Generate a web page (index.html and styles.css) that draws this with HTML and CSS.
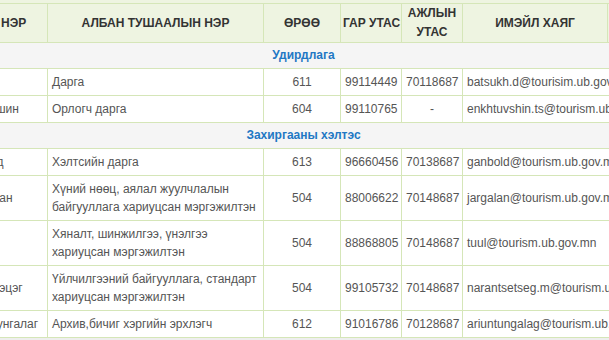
FILE: index.html
```html
<!DOCTYPE html>
<html lang="mn">
<head>
<meta charset="utf-8">
<title>Ажилтны утасны жагсаалт</title>
<link rel="stylesheet" href="styles.css">
</head>
<body>
<div class="viewport">
  <div class="top-strip"></div>
  <table class="staff">
    <colgroup>
      <col class="c-name">
      <col class="c-pos">
      <col class="c-room">
      <col class="c-mob">
      <col class="c-work">
      <col class="c-mail">
      <col class="c-extra">
    </colgroup>
    <thead>
      <tr>
        <th>ОВОГ НЭР</th>
        <th>АЛБАН ТУШААЛЫН НЭР</th>
        <th>ӨРӨӨ</th>
        <th>ГАР УТАС</th>
        <th>АЖЛЫН<br>УТАС</th>
        <th>ИМЭЙЛ ХАЯГ</th>
        <th></th>
      </tr>
    </thead>
    <tbody>
      <tr class="section"><td colspan="7">Удирдлага</td></tr>
      <tr>
        <td class="name">Батсүх</td>
        <td>Дарга</td>
        <td class="num">611</td>
        <td class="num">99114449</td>
        <td class="num">70118687</td>
        <td class="mail" colspan="2">batsukh.d@tourisim.ub.gov.mn</td>
      </tr>
      <tr>
        <td class="name">Энхтүвшин</td>
        <td>Орлогч дарга</td>
        <td class="num">604</td>
        <td class="num">99110765</td>
        <td class="num">-</td>
        <td class="mail" colspan="2">enkhtuvshin.ts@tourism.ub.gov.mn</td>
      </tr>
      <tr class="section"><td colspan="7">Захиргааны хэлтэс</td></tr>
      <tr>
        <td class="name">Ганболд</td>
        <td>Хэлтсийн дарга</td>
        <td class="num">613</td>
        <td class="num">96660456</td>
        <td class="num">70138687</td>
        <td class="mail" colspan="2">ganbold@tourism.ub.gov.mn</td>
      </tr>
      <tr>
        <td class="name">Жаргалан</td>
        <td>Хүний нөөц, аялал жуулчлалын байгууллага хариуцсан мэргэжилтэн</td>
        <td class="num">504</td>
        <td class="num">88006622</td>
        <td class="num">70148687</td>
        <td class="mail" colspan="2">jargalan@tourism.ub.gov.mn</td>
      </tr>
      <tr>
        <td class="name">Туул</td>
        <td>Хяналт, шинжилгээ, үнэлгээ хариуцсан мэргэжилтэн</td>
        <td class="num">504</td>
        <td class="num">88868805</td>
        <td class="num">70148687</td>
        <td class="mail" colspan="2">tuul@tourism.ub.gov.mn</td>
      </tr>
      <tr>
        <td class="name">Наранцэцэг</td>
        <td>Үйлчилгээний байгууллага, стандарт хариуцсан мэргэжилтэн</td>
        <td class="num">504</td>
        <td class="num">99105732</td>
        <td class="num">70148687</td>
        <td class="mail" colspan="2">narantsetseg.m@tourism.ub.gov.mn</td>
      </tr>
      <tr>
        <td class="name">Ариунтунгалаг</td>
        <td>Архив,бичиг хэргийн эрхлэгч</td>
        <td class="num">612</td>
        <td class="num">91016786</td>
        <td class="num">70128687</td>
        <td class="mail" colspan="2">ariuntungalag@tourism.ub.gov.mn</td>
      </tr>
    </tbody>
  </table>
  <div class="bottom-strip"></div>
</div>
</body>
</html>
```
FILE: styles.css
```css
html, body {
  margin: 0;
  padding: 0;
  overflow: hidden;
  background: #ffffff;
}

.viewport {
  width: 609px;
  height: 340px;
  overflow: hidden;
  font-family: "Liberation Sans", Arial, sans-serif;
  font-size: 12px;
  color: #555555;
}

.top-strip {
  height: 3px;
  background: #eef4e1;
}

.staff {
  margin-left: -58px;
  width: 722px;
  table-layout: fixed;
  border-collapse: collapse;
}

.c-name { width: 105px; }
.c-pos { width: 216px; }
.c-room { width: 77px; }
.c-mob { width: 61px; }
.c-work { width: 61px; }
.c-mail { width: 145px; }
.c-extra { width: 57px; }

.staff th {
  background: #eef4e1;
  color: #333333;
  font-weight: bold;
  font-size: 12px;
  line-height: 19px;
  height: 38px;
  padding: 0 2px;
  text-align: center;
  white-space: nowrap;
  border: 1px solid #d5e6b8;
  box-sizing: border-box;
}

.staff td {
  padding: 4px 4px;
  line-height: 18px;
  border: 1px solid #d5e6b8;
  vertical-align: middle;
  text-align: left;
}

.staff td.name {
  padding-left: 14px;
  white-space: nowrap;
}

.staff td.num {
  text-align: center;
  white-space: nowrap;
}

.staff td.mail {
  white-space: nowrap;
  overflow: hidden;
}

.staff tr.section td {
  background: #f5f5f5;
  color: #1f78c4;
  font-weight: bold;
  text-align: center;
  padding: 4px 4px;
  line-height: 17px;
}

.bottom-strip {
  height: 10px;
  background: #eeeeee;
}
```
